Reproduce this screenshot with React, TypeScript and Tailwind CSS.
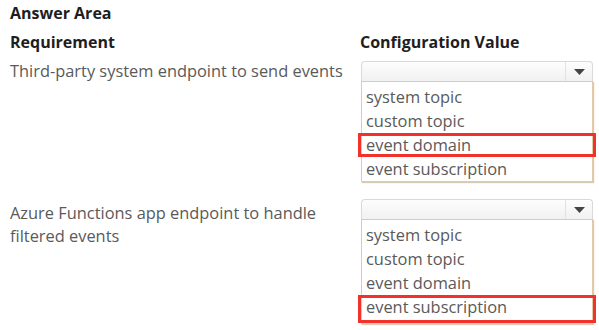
const options = ['system topic', 'custom topic', 'event domain', 'event subscription'];

type Row = { label: string[]; answer: number };

const rows: Row[] = [
  { label: ['Third-party system endpoint to send events'], answer: 2 },
  { label: ['Azure Functions app endpoint to handle', 'filtered events'], answer: 3 },
];

function Dropdown({ answer }: { answer: number }) {
  return (
    <div className="w-[232px] shrink-0">
      <div className="flex h-[20px] rounded-t-[4px] border border-b-0 border-[#d9d9d9] bg-gradient-to-b from-[#fdfdfd] to-[#f1f1f1]">
        <div className="flex-1" />
        <div className="flex w-[27px] items-center justify-center border-l border-[#e2e2e2]">
          <svg width="11" height="6" viewBox="0 0 11 6">
            <path d="M0 0 L11 0 L5.5 6 Z" fill="#444" />
          </svg>
        </div>
      </div>
      <div className="border border-[#e3c9a6] bg-white pt-[3px] shadow-[1px_1px_1px_rgba(180,150,110,0.5)]">
        {options.map((o, i) => {
          if (i !== answer) {
            return (
              <div key={o} className="h-[24px] pl-[4px] leading-[24px]">
                {o}
              </div>
            );
          }
          const last = i === options.length - 1;
          return (
            <div
              key={o}
              className={
                last
                  ? '-mx-[4px] h-[28px] border-[3px] border-[#f2312a] pl-[5px] leading-[18px]'
                  : '-mx-[4px] h-[24px] border-[3px] border-[#f2312a] pl-[5px] leading-[18px]'
              }
            >
              {o}
            </div>
          );
        })}
      </div>
    </div>
  );
}

export default function App() {
  return (
    <main
      className="h-[330px] w-[599px] overflow-hidden bg-white pl-[10px] pt-[3px] text-[16.4px] text-[#5a5a5a]"
      style={{ fontFamily: '"Open Sans", sans-serif' }}
    >
      <h1 className="text-[16px] font-bold leading-[20px] text-[#1e1e1e]">Answer Area</h1>

      <div className="mt-[9px] flex text-[16px] font-bold leading-[20px] text-[#1e1e1e]">
        <div className="w-[350px]">Requirement</div>
        <div>Configuration Value</div>
      </div>

      {rows.map((r, i) => (
        <div key={i} className={i === 0 ? 'mt-[9px] flex' : 'mt-[17px] flex'}>
          <div
            className={
              i === 0
                ? '-mt-[2px] w-[351px] shrink-0 leading-[23px]'
                : 'mt-[2px] w-[351px] shrink-0 leading-[23px]'
            }
          >
            {r.label.map((l) => (
              <div key={l}>{l}</div>
            ))}
          </div>
          <Dropdown answer={r.answer} />
        </div>
      ))}
    </main>
  );
}
